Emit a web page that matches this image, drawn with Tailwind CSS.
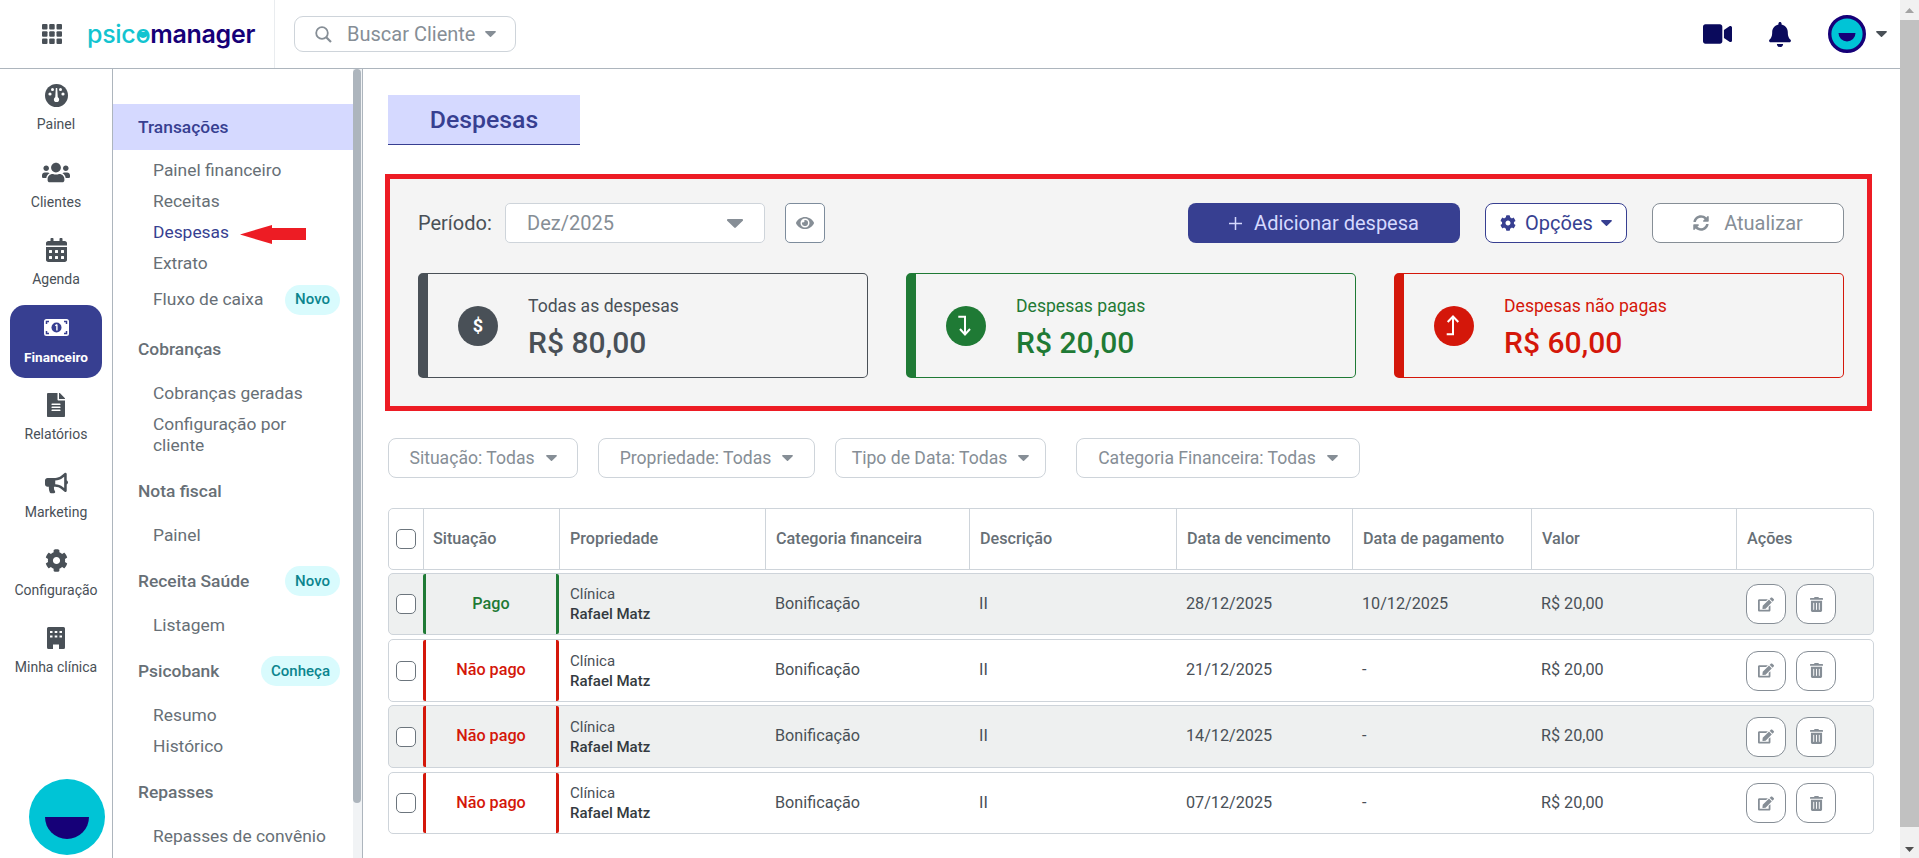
<!DOCTYPE html>
<html lang="pt-BR">
  <head>
    <meta charset="UTF-8" />
    <title>Despesas</title>
    <script src="https://cdn.jsdelivr.net/npm/@tailwindcss/browser@4"></script>
  </head>
  <body class="h-[858px] w-[1919px] overflow-hidden bg-white font-['Roboto',sans-serif] text-[#495057]">
    <svg class="hidden">
      <symbol id="caret" viewBox="0 0 16 9"><path d="M1 0h14c1 0 1.400 1 .8 1.700L8.800 8.600c-.4.500-1.200.500-1.600 0L.2 1.700C-.4 1 0 0 1 0z" fill="currentColor" /></symbol>
      <symbol id="edit" viewBox="0 0 576 512"><path fill="currentColor" d="M402.600 83.200l90.200 90.200c3.800 3.800 3.800 10 0 13.800L274.400 405.600l-92.800 10.300c-12.400 1.400-22.900-9.100-21.500-21.500l10.300-92.800L388.800 83.200c3.800-3.800 10-3.800 13.800 0zm162-22.900l-48.800-48.800c-15.200-15.200-39.900-15.200-55.200 0l-35.400 35.400c-3.800 3.800-3.800 10 0 13.800l90.200 90.200c3.800 3.800 10 3.800 13.800 0l35.400-35.400c15.200-15.300 15.200-40 0-55.200zM384 346.200V448H64V128h229.800c3.200 0 6.200-1.300 8.500-3.500l40-40c7.600-7.600 2.200-20.500-8.500-20.500H48C21.500 64 0 85.500 0 112v352c0 26.500 21.500 48 48 48h352c26.500 0 48-21.500 48-48V306.200c0-10.700-12.900-16-20.500-8.500l-40 40c-2.200 2.300-3.500 5.300-3.500 8.500z" /></symbol>
      <symbol id="trash" viewBox="0 0 448 512"><path fill="currentColor" d="M32 464a48 48 0 0 0 48 48h288a48 48 0 0 0 48-48V128H32zm272-256a16 16 0 0 1 32 0v224a16 16 0 0 1-32 0zm-96 0a16 16 0 0 1 32 0v224a16 16 0 0 1-32 0zm-96 0a16 16 0 0 1 32 0v224a16 16 0 0 1-32 0zM432 32H312l-9.400-18.700A24 24 0 0 0 281.100 0H166.800a23.720 23.720 0 0 0-21.400 13.300L136 32H16A16 16 0 0 0 0 48v32a16 16 0 0 0 16 16h416a16 16 0 0 0 16-16V48a16 16 0 0 0-16-16z" /></symbol>
      <symbol id="cog" viewBox="0 0 512 512"><path fill="currentColor" d="M487.400 315.700l-42.600-24.600c4.300-23.200 4.300-47 0-70.200l42.600-24.600c4.900-2.800 7.100-8.600 5.500-14-11.100-35.600-30-67.800-54.700-94.600-3.800-4.100-10-5.100-14.800-2.300L380.800 110c-17.900-15.400-38.500-27.300-60.800-35.100V25.800c0-5.600-3.900-10.500-9.400-11.700-36.700-8.200-74.300-7.800-109.200 0-5.500 1.200-9.400 6.100-9.400 11.700V75c-22.200 7.900-42.800 19.800-60.800 35.100L88.700 85.500c-4.900-2.800-11-1.900-14.800 2.300-24.700 26.700-43.600 58.900-54.700 94.600-1.700 5.400.6 11.200 5.500 14L67.300 221c-4.300 23.200-4.300 47 0 70.200l-42.600 24.600c-4.900 2.800-7.100 8.600-5.500 14 11.100 35.600 30 67.800 54.700 94.600 3.800 4.100 10 5.100 14.800 2.300l42.600-24.600c17.900 15.400 38.500 27.300 60.800 35.100v49.200c0 5.600 3.900 10.500 9.400 11.700 36.700 8.200 74.300 7.800 109.200 0 5.500-1.200 9.400-6.100 9.400-11.700v-49.200c22.200-7.900 42.800-19.800 60.800-35.100l42.600 24.600c4.900 2.800 11 1.900 14.800-2.300 24.700-26.700 43.600-58.900 54.700-94.600 1.500-5.500-.7-11.300-5.600-14.100zM256 336c-44.100 0-80-35.900-80-80s35.900-80 80-80 80 35.900 80 80-35.900 80-80 80z" /></symbol>
    </svg>

    <div class="flex h-full">
      <div class="flex h-full w-[1900px] flex-col">
        <!-- Top bar -->
        <header class="flex h-[69px] shrink-0 items-center border-b border-[#adb5bd]">
          <div class="flex h-full w-[275px] shrink-0 items-center border-r border-[#e9ecef]">
            <svg class="ml-[42px] h-5 w-5 text-[#495057]" viewBox="0 0 20 20" fill="currentColor">
              <rect x="0" y="0" width="5.500" height="5.500" rx="1" /><rect x="7.200" y="0" width="5.500" height="5.500" rx="1" /><rect x="14.500" y="0" width="5.500" height="5.500" rx="1" />
              <rect x="0" y="7.200" width="5.500" height="5.500" rx="1" /><rect x="7.200" y="7.200" width="5.500" height="5.500" rx="1" /><rect x="14.500" y="7.200" width="5.500" height="5.500" rx="1" />
              <rect x="0" y="14.500" width="5.500" height="5.500" rx="1" /><rect x="7.200" y="14.500" width="5.500" height="5.500" rx="1" /><rect x="14.500" y="14.500" width="5.500" height="5.500" rx="1" />
            </svg>
            <div class="ml-[25px] font-['Inter',sans-serif] text-[25px] leading-none tracking-[-0.3px]">
              <span class="font-medium text-[#13c4d0]">psic<span class="relative">o<span class="absolute left-[3px] top-[13px] h-[6px] w-[10px] rounded-b-full bg-[#13c4d0]"></span></span></span><span class="font-semibold text-[#160078]">manager</span>
            </div>
          </div>
          <button class="ml-[19px] flex h-[36px] w-[222px] items-center rounded-[9px] border border-[#ced4da] text-[#868e96]">
            <svg class="ml-[20px] h-[17px] w-[17px]" viewBox="0 0 17 17" fill="none" stroke="currentColor" stroke-width="1.800"><circle cx="7" cy="7" r="5.800" /><path d="M11.200 11.200L16 16" stroke-width="2.200" /></svg>
            <span class="ml-[15px] whitespace-nowrap text-[20px]">Buscar Cliente</span>
            <svg class="ml-[10px] h-[6px] w-[11px]"><use href="#caret" /></svg>
          </button>
          <div class="ml-auto flex items-center text-[#0a0a5c]">
            <svg class="h-[26px] w-[29px]" viewBox="0 0 576 512" fill="currentColor"><path d="M336.200 64H47.800C21.400 64 0 85.400 0 111.800v288.400C0 426.600 21.400 448 47.800 448h288.400c26.400 0 47.800-21.400 47.800-47.800V111.800c0-26.400-21.400-47.800-47.800-47.800zm189.400 37.700L416 177.300v157.400l109.600 75.500c21.200 14.600 50.400-.3 50.400-25.800V127.500c0-25.400-29.100-40.400-50.400-25.800z" /></svg>
            <svg class="ml-[37px] h-[25px] w-[22px]" viewBox="0 0 448 512" fill="currentColor"><path d="M224 512c35.320 0 63.970-28.650 63.970-64H160.030c0 35.350 28.650 64 63.970 64zm215.390-149.710c-19.320-20.760-55.470-51.990-55.470-154.290 0-77.700-54.480-139.900-127.940-155.160V32c0-17.670-14.320-32-31.980-32s-31.980 14.330-31.980 32v20.840C118.560 68.100 64.080 130.300 64.080 208c0 102.300-36.150 133.530-55.470 154.290-6 6.450-8.660 14.160-8.610 21.710.11 16.400 12.980 32 32.100 32h383.800c19.120 0 32-15.600 32.100-32 .05-7.550-2.610-15.270-8.610-21.710z" /></svg>
            <svg class="ml-[37px] h-[38px] w-[38px]" viewBox="0 0 38 38"><circle cx="19" cy="19" r="17.300" fill="#00c4d6" stroke="#160078" stroke-width="3.400" /><path d="M10.500 18h17a8.500 8.500 0 0 1-17 0z" fill="#160078" /></svg>
            <svg class="ml-[10px] mr-[13px] h-[6px] w-[11px] text-[#495057]"><use href="#caret" /></svg>
          </div>
        </header>

        <div class="flex min-h-0 flex-1">
          <!-- Icon rail -->
          <nav class="flex w-[113px] shrink-0 flex-col gap-[4.600px] border-r border-[#adb5bd] pt-[3px] text-[14px] leading-5">
            <a class="ml-[10px] flex h-[73px] w-[92px] flex-col items-center pt-[11px]">
              <span class="flex h-6 items-center"><svg class="h-[23px] w-[23px]" viewBox="0 0 23 23"><circle cx="11.500" cy="11.500" r="11.500" fill="#495057" /><g fill="#fff"><circle cx="5" cy="10" r="1.600" /><circle cx="18" cy="10" r="1.600" /><circle cx="7.500" cy="5.500" r="1.500" /><circle cx="15.500" cy="5.500" r="1.500" /><path d="M10.800 4h1.400l.6 10h-2.600z" /><circle cx="11.500" cy="15.500" r="2.600" /></g></svg></span>
              <span class="mt-[7px]">Painel</span>
            </a>
            <a class="ml-[10px] flex h-[73px] w-[92px] flex-col items-center pt-[11px]">
              <span class="flex h-6 items-center"><svg class="h-[23px] w-[28px]" viewBox="0 0 640 512" fill="currentColor"><path d="M96 224c35.300 0 64-28.700 64-64s-28.700-64-64-64-64 28.700-64 64 28.700 64 64 64zm448 0c35.300 0 64-28.700 64-64s-28.700-64-64-64-64 28.700-64 64 28.700 64 64 64zm32 32h-64c-17.600 0-33.500 7.100-45.100 18.600 40.300 22.100 68.900 62 75.100 109.400h66c17.700 0 32-14.300 32-32v-32c0-35.300-28.700-64-64-64zm-256 0c61.900 0 112-50.100 112-112S381.900 32 320 32 208 82.100 208 144s50.100 112 112 112zm76.800 32h-8.300c-20.800 10-43.900 16-68.500 16s-47.600-6-68.500-16h-8.300C179.600 288 128 339.600 128 403.200V432c0 26.500 21.500 48 48 48h288c26.500 0 48-21.500 48-48v-28.800c0-63.600-51.600-115.200-115.200-115.200zm-223.700-13.400C161.500 263.100 145.600 256 128 256H64c-35.300 0-64 28.700-64 64v32c0 17.700 14.300 32 32 32h65.900c6.300-47.400 34.900-87.300 75.200-109.400z" /></svg></span>
              <span class="mt-[7px]">Clientes</span>
            </a>
            <a class="ml-[10px] flex h-[73px] w-[92px] flex-col items-center pt-[11px]">
              <span class="flex h-6 items-center"><svg class="h-[24px] w-[21px]" viewBox="0 0 448 512" fill="currentColor"><path d="M0 464c0 26.500 21.500 48 48 48h352c26.500 0 48-21.500 48-48V192H0v272zm320-196c0-6.600 5.400-12 12-12h40c6.600 0 12 5.400 12 12v40c0 6.600-5.400 12-12 12h-40c-6.600 0-12-5.400-12-12v-40zm0 128c0-6.600 5.400-12 12-12h40c6.600 0 12 5.400 12 12v40c0 6.600-5.400 12-12 12h-40c-6.600 0-12-5.400-12-12v-40zM192 268c0-6.600 5.400-12 12-12h40c6.600 0 12 5.400 12 12v40c0 6.600-5.400 12-12 12h-40c-6.600 0-12-5.400-12-12v-40zm0 128c0-6.600 5.400-12 12-12h40c6.600 0 12 5.400 12 12v40c0 6.600-5.400 12-12 12h-40c-6.600 0-12-5.400-12-12v-40zM64 268c0-6.600 5.400-12 12-12h40c6.600 0 12 5.400 12 12v40c0 6.600-5.400 12-12 12H76c-6.600 0-12-5.400-12-12v-40zm0 128c0-6.600 5.400-12 12-12h40c6.600 0 12 5.400 12 12v40c0 6.600-5.400 12-12 12H76c-6.600 0-12-5.400-12-12v-40zM400 64h-48V16c0-8.800-7.200-16-16-16h-32c-8.800 0-16 7.200-16 16v48H160V16c0-8.800-7.200-16-16-16h-32c-8.800 0-16 7.200-16 16v48H48C21.500 64 0 85.500 0 112v48h448v-48c0-26.500-21.500-48-48-48z" /></svg></span>
              <span class="mt-[7px]">Agenda</span>
            </a>
            <a class="ml-[10px] flex h-[73px] w-[92px] flex-col items-center rounded-[15px] bg-[#373f91] pt-[11px] text-[13.600px] font-bold text-white">
              <span class="flex h-6 items-center"><svg class="h-[17px] w-[25px]" viewBox="0 0 25 17"><rect width="25" height="17" rx="2.500" fill="#fff" /><circle cx="12.500" cy="8.500" r="5" fill="#373f91" /><path d="M12.900 5.500v6M11.300 6.800l1.600-1.300" stroke="#fff" stroke-width="1.400" fill="none" /><path d="M2.500 5V2.500H5M20 2.500h2.500V5M2.500 12v2.500H5M20 14.500h2.500V12" stroke="#373f91" stroke-width="1.500" fill="none" /></svg></span>
              <span class="mt-[7px]">Financeiro</span>
            </a>
            <a class="ml-[10px] flex h-[73px] w-[92px] flex-col items-center pt-[11px]">
              <span class="flex h-6 items-center"><svg class="h-[24px] w-[18px]" viewBox="0 0 384 512" fill="currentColor"><path d="M224 136V0H24C10.700 0 0 10.700 0 24v464c0 13.300 10.700 24 24 24h336c13.300 0 24-10.700 24-24V160H248c-13.200 0-24-10.800-24-24zm64 236c0 6.600-5.400 12-12 12H108c-6.600 0-12-5.400-12-12v-8c0-6.600 5.400-12 12-12h168c6.600 0 12 5.400 12 12v8zm0-64c0 6.600-5.400 12-12 12H108c-6.600 0-12-5.400-12-12v-8c0-6.600 5.400-12 12-12h168c6.600 0 12 5.400 12 12v8zm0-72v8c0 6.600-5.400 12-12 12H108c-6.600 0-12-5.400-12-12v-8c0-6.600 5.400-12 12-12h168c6.600 0 12 5.400 12 12zm96-114.100v6.100H256V0h6.100c6.400 0 12.500 2.500 17 7l97.900 98c4.500 4.500 7 10.600 7 16.900z" /></svg></span>
              <span class="mt-[7px]">Relatórios</span>
            </a>
            <a class="ml-[10px] flex h-[73px] w-[92px] flex-col items-center pt-[11px]">
              <span class="flex h-6 items-center"><svg class="h-[22px] w-[23px]" viewBox="0 0 576 512" fill="currentColor"><path d="M576 240c0-23.630-12.950-44.040-32-55.120V32.010C544 23.260 537.020 0 512 0c-7.120 0-14.190 2.380-19.980 7.020l-85.030 68.030C364.280 109.190 310.660 128 256 128H64c-35.350 0-64 28.650-64 64v96c0 35.350 28.650 64 64 64h33.700c-1.390 10.480-2.180 21.140-2.180 32 0 39.770 9.260 77.350 25.560 110.940 5.190 10.690 16.520 17.060 28.400 17.060h74.280c26.050 0 41.690-29.840 25.900-50.560-16.400-21.520-26.150-48.360-26.150-77.440 0-11.110 1.620-21.790 4.410-32H256c54.660 0 108.280 18.810 150.980 52.950l85.030 68.030a32.023 32.023 0 0 0 19.980 7.020c24.920 0 32-22.780 32-32V295.130C563.050 284.040 576 263.630 576 240zm-96 141.420l-33.050-26.440C392.950 311.780 325.120 288 256 288v-96c69.120 0 136.950-23.780 190.950-66.980L480 98.580v282.840z" /></svg></span>
              <span class="mt-[7px]">Marketing</span>
            </a>
            <a class="ml-[10px] flex h-[73px] w-[92px] flex-col items-center pt-[11px]">
              <span class="flex h-6 items-center"><svg class="h-[23px] w-[23px]"><use href="#cog" /></svg></span>
              <span class="mt-[7px] whitespace-nowrap">Configuração</span>
            </a>
            <a class="ml-[10px] flex h-[73px] w-[92px] flex-col items-center pt-[11px]">
              <span class="flex h-6 items-center"><svg class="h-[22px] w-[18px]" viewBox="0 0 18 22" fill="currentColor"><path fill-rule="evenodd" d="M1.500 0h15A1.500 1.500 0 0 1 18 1.500V20.500a1.500 1.500 0 0 1-1.500 1.500H12V17.500H6V22H1.500A1.500 1.500 0 0 1 0 20.500V1.500A1.500 1.500 0 0 1 1.500 0zM3 4v2h2.500V4zm4.700 0v2h2.600V4zM12.500 4v2H15V4zM3 8.500v2h2.500v-2zm4.700 0v2h2.600v-2zm4.800 0v2H15v-2z" /></svg></span>
              <span class="mt-[7px] whitespace-nowrap">Minha clínica</span>
            </a>
            <svg class="ml-[29px] mt-auto mb-[3px] h-[76px] w-[76px] shrink-0" viewBox="0 0 76 76"><circle cx="38" cy="38" r="38" fill="#00c4d6" /><path d="M16 38h44a22 22 0 0 1-44 0z" fill="#160078" /></svg>
          </nav>

          <!-- Submenu -->
          <aside class="relative flex w-[250px] shrink-0 border-r border-[#adb5bd] text-[17.400px]">
            <div class="w-[240px] shrink-0 pt-[35px] leading-[21px]">
              <h3 class="flex h-[46px] items-center bg-[#d5d9ff] pl-[25px] font-medium text-[#373f91]">Transações</h3>
              <ul class="mt-[5px] pl-[40px] text-[#676f76]">
                <li class="flex h-[31px] items-center">Painel financeiro</li>
                <li class="flex h-[31px] items-center">Receitas</li>
                <li class="flex h-[31px] items-center text-[#373f91]">Despesas</li>
                <li class="flex h-[31px] items-center">Extrato</li>
                <li class="mt-[5px] flex h-[31px] items-center justify-between pr-[13px]">Fluxo de caixa<span class="flex h-[30px] items-center rounded-full bg-[#d9fbfd] px-[10px] text-[15px] font-medium text-[#0b858e]">Novo</span></li>
              </ul>
              <h3 class="mt-[11px] flex h-[46px] items-center pl-[25px] font-medium text-[#676f76]">Cobranças</h3>
              <ul class="mt-[6px] pl-[40px] text-[#676f76]">
                <li class="flex h-[31px] items-center">Cobranças geradas</li>
                <li class="w-[170px] py-[5px]">Configuração por cliente</li>
              </ul>
              <h3 class="mt-[7px] flex h-[46px] items-center pl-[25px] font-medium text-[#676f76]">Nota fiscal</h3>
              <ul class="mt-[6px] pl-[40px] text-[#676f76]">
                <li class="flex h-[31px] items-center">Painel</li>
              </ul>
              <h3 class="mt-[7px] flex h-[46px] items-center justify-between pl-[25px] pr-[13px] font-medium text-[#676f76]">Receita Saúde<span class="flex h-[30px] items-center rounded-full bg-[#d9fbfd] px-[10px] text-[15px] font-medium text-[#0b858e]">Novo</span></h3>
              <ul class="mt-[6px] pl-[40px] text-[#676f76]">
                <li class="flex h-[31px] items-center">Listagem</li>
              </ul>
              <h3 class="mt-[7px] flex h-[46px] items-center justify-between pl-[25px] pr-[13px] font-medium text-[#676f76]">Psicobank<span class="flex h-[30px] items-center rounded-full bg-[#d9fbfd] px-[10px] text-[15px] font-medium text-[#0b858e]">Conheça</span></h3>
              <ul class="mt-[6px] pl-[40px] text-[#676f76]">
                <li class="flex h-[31px] items-center">Resumo</li>
                <li class="flex h-[31px] items-center">Histórico</li>
              </ul>
              <h3 class="mt-[7px] flex h-[46px] items-center pl-[25px] font-medium text-[#676f76]">Repasses</h3>
              <ul class="mt-[6px] pl-[40px] text-[#676f76]">
                <li class="flex h-[31px] items-center">Repasses de convênio</li>
              </ul>
            </div>
            <div class="flex-1 bg-[#f1f3f5]">
              <div class="h-[734px] w-[8px] rounded-full bg-[#adb5bd]"></div>
            </div>
            <!-- hand-drawn arrow from the screenshot annotation -->
            <svg class="absolute left-[127px] top-[156px] h-[19px] w-[66px]" viewBox="0 0 66 19"><path d="M0 9.500L32 0v3h34v12H32v4z" fill="#ed1c24" /></svg>
          </aside>

          <!-- Content -->
          <main class="min-w-0 flex-1 pl-[25px] pr-[27px] pt-[26px]">
            <div class="flex h-[50px] w-[192px] items-center justify-center border-b border-[#373f91] bg-[#d5d9ff] text-[24.800px] font-medium text-[#373f91]">Despesas</div>

            <section class="-ml-[3px] mt-[29px] h-[237px] w-[1487px] border-[5px] border-[#ed1c24] bg-[#f4f4f4] pl-[28px] pr-[23px] pt-[24px]">
              <div class="flex h-10 items-center text-[20px]">
                <span class="w-[87px]">Período:</span>
                <div class="flex h-10 w-[260px] items-center justify-between rounded-[5px] border border-[#ced4da] bg-white pl-[21px] pr-[21px] text-[#868e96]">
                  Dez/2025
                  <svg class="h-[9px] w-[16px]"><use href="#caret" /></svg>
                </div>
                <button class="ml-[20px] flex h-10 w-10 items-center justify-center rounded-[5px] border border-[#7d8c9c] bg-white text-[#868e96]">
                  <svg class="h-[16px] w-[18px]" viewBox="0 0 576 512" fill="currentColor"><path d="M572.520 241.400C518.290 135.590 410.930 64 288 64S57.680 135.640 3.480 241.410a32.350 32.350 0 0 0 0 29.190C57.710 376.410 165.070 448 288 448s230.320-71.640 284.520-177.410a32.350 32.350 0 0 0 0-29.190zM288 400a144 144 0 1 1 144-144 143.930 143.930 0 0 1-144 144zm0-240a95.310 95.310 0 0 0-25.310 3.790 47.850 47.850 0 0 1-66.900 66.900A95.780 95.780 0 1 0 288 160z" /></svg>
                </button>
                <button class="ml-auto flex h-10 w-[272px] items-center justify-center rounded-[8px] bg-[#373f91] text-[#d5d9ff]">
                  <svg class="mr-[12px] h-[13px] w-[13px]" viewBox="0 0 13 13" stroke="currentColor" stroke-width="1.500"><path d="M6.500 0v13M0 6.500h13" /></svg>
                  Adicionar despesa
                </button>
                <button class="ml-[25px] flex h-10 w-[142px] items-center justify-center rounded-[8px] border border-[#373f91] bg-white text-[#373f91]">
                  <svg class="mr-[9px] h-[16px] w-[16px]"><use href="#cog" /></svg>
                  Opções
                  <svg class="ml-[8px] h-[6px] w-[11px]"><use href="#caret" /></svg>
                </button>
                <button class="ml-[25px] flex h-10 w-[192px] items-center justify-center rounded-[8px] border border-[#868e96] bg-white text-[#868e96]">
                  <svg class="mr-[15px] h-[16px] w-[16px]" viewBox="0 0 512 512" fill="currentColor"><path d="M370.720 133.280C339.458 104.008 298.888 87.962 255.848 88c-77.458.068-144.328 53.178-162.791 126.850-1.344 5.363-6.122 9.150-11.651 9.150H24.103c-7.498 0-13.194-6.807-11.807-14.176C33.933 94.924 134.813 8 256 8c66.448 0 126.791 26.136 171.315 68.685L463.030 40.970C478.149 25.851 504 36.559 504 57.941V192c0 13.255-10.745 24-24 24H345.941c-21.382 0-32.090-25.851-16.971-40.971l41.750-41.749zM32 296h134.059c21.382 0 32.090 25.851 16.971 40.971l-41.750 41.750c31.262 29.273 71.835 45.319 114.876 45.280 77.418-.07 144.315-53.144 162.787-126.849 1.344-5.363 6.122-9.150 11.651-9.150h57.304c7.498 0 13.194 6.807 11.807 14.176C478.067 417.076 377.187 504 256 504c-66.448 0-126.791-26.136-171.315-68.685L48.970 471.030C33.851 486.149 8 475.441 8 454.059V320c0-13.255 10.745-24 24-24z" /></svg>
                  Atualizar
                </button>
              </div>

              <div class="mt-[30px] flex gap-[38px]">
                <div class="flex h-[105px] w-[450px] items-center rounded-[5px] border border-[#495057] border-l-[10px] pl-[30px]">
                  <span class="flex h-10 w-10 items-center justify-center rounded-full bg-[#495057] text-[18px] font-bold text-white">$</span>
                  <div class="ml-[30px] pt-[6px]">
                    <p class="text-[17.600px] leading-5">Todas as despesas</p>
                    <p class="mt-[9px] text-[30px] font-medium leading-9">R$ 80,00</p>
                  </div>
                </div>
                <div class="flex h-[105px] w-[450px] items-center rounded-[5px] border border-[#1f7a35] border-l-[10px] pl-[30px] text-[#1f7a35]">
                  <svg class="h-10 w-10" viewBox="0 0 40 40"><circle cx="20" cy="20" r="20" fill="#1f7a35" /><path d="M12.300 10.700H19V28M14 23l5 5.500 5-5.500" fill="none" stroke="#fff" stroke-width="2" /></svg>
                  <div class="ml-[30px] pt-[6px]">
                    <p class="text-[17.600px] leading-5">Despesas pagas</p>
                    <p class="mt-[9px] text-[30px] font-medium leading-9">R$ 20,00</p>
                  </div>
                </div>
                <div class="flex h-[105px] w-[450px] items-center rounded-[5px] border border-[#d4170a] border-l-[10px] pl-[30px] text-[#d4170a]">
                  <svg class="h-10 w-10" viewBox="0 0 40 40"><circle cx="20" cy="20" r="20" fill="#d4170a" /><path d="M12.700 28.300H19V11M13.700 16l5.300-5.500 5.300 5.500" fill="none" stroke="#fff" stroke-width="2" /></svg>
                  <div class="ml-[30px] pt-[6px]">
                    <p class="text-[17.600px] leading-5">Despesas não pagas</p>
                    <p class="mt-[9px] text-[30px] font-medium leading-9">R$ 60,00</p>
                  </div>
                </div>
              </div>
            </section>

            <!-- Filters -->
            <div class="mt-[27px] flex gap-[20px] text-[17.600px] text-[#868e96]">
              <button class="flex h-10 w-[190px] items-center justify-center gap-[11px] rounded-[8px] border border-[#ced4da]">Situação: Todas<svg class="h-[6px] w-[11px]"><use href="#caret" /></svg></button>
              <button class="flex h-10 w-[217px] items-center justify-center gap-[11px] rounded-[8px] border border-[#ced4da]">Propriedade: Todas<svg class="h-[6px] w-[11px]"><use href="#caret" /></svg></button>
              <button class="flex h-10 w-[211px] items-center justify-center gap-[11px] rounded-[8px] border border-[#ced4da]">Tipo de Data: Todas<svg class="h-[6px] w-[11px]"><use href="#caret" /></svg></button>
              <button class="ml-[10px] flex h-10 w-[284px] items-center justify-center gap-[11px] rounded-[8px] border border-[#ced4da]">Categoria Financeira: Todas<svg class="h-[6px] w-[11px]"><use href="#caret" /></svg></button>
            </div>

            <!-- Table -->
            <div class="mt-[30px] flex w-[1486px] flex-col gap-[4px] text-[16.200px]">
              <div class="mb-[-1px] grid h-[62px] grid-cols-[34px_136px_206px_204px_207px_176px_179px_205px_1fr] items-stretch rounded-[5px] border border-[#ced4da] font-medium text-[#676f76]">
                <div class="flex items-center pl-[7px]"><span class="h-5 w-5 rounded-[5px] border border-[#6c757d] bg-white"></span></div>
                <div class="flex items-center border-l border-[#ced4da] pl-[9px]">Situação</div>
                <div class="flex items-center border-l border-[#ced4da] pl-[10px]">Propriedade</div>
                <div class="flex items-center border-l border-[#ced4da] pl-[10px]">Categoria financeira</div>
                <div class="flex items-center border-l border-[#ced4da] pl-[10px]">Descrição</div>
                <div class="flex items-center border-l border-[#ced4da] pl-[10px]">Data de vencimento</div>
                <div class="flex items-center border-l border-[#ced4da] pl-[10px]">Data de pagamento</div>
                <div class="flex items-center border-l border-[#ced4da] pl-[10px]">Valor</div>
                <div class="flex items-center border-l border-[#ced4da] pl-[10px]">Ações</div>
              </div>

              <div class="grid h-[62px] grid-cols-[34px_136px_206px_204px_207px_176px_179px_205px_1fr] items-stretch rounded-[5px] border border-[#ced4da] bg-[#eef0f0]">
                <div class="flex items-center pl-[7px]"><span class="h-5 w-5 rounded-[5px] border border-[#6c757d] bg-white"></span></div>
                <div class="flex items-center justify-center rounded-[2px] border-x-[3px] border-[#1f7a35] font-medium text-[#1f7a35]">Pago</div>
                <div class="flex flex-col justify-center pl-[11px] text-[15px] leading-5"><span>Clínica</span><span class="font-medium text-[#343a40]">Rafael Matz</span></div>
                <div class="flex items-center pl-[10px]">Bonificação</div>
                <div class="flex items-center pl-[10px]">II</div>
                <div class="flex items-center pl-[10px]">28/12/2025</div>
                <div class="flex items-center pl-[10px]">10/12/2025</div>
                <div class="flex items-center pl-[10px]">R$ 20,00</div>
                <div class="flex items-center gap-[10px] pl-[10px] text-[#868e96]">
                  <button class="flex h-10 w-10 items-center justify-center rounded-[12px] border border-[#868e96] bg-white"><svg class="h-[15px] w-[16px]"><use href="#edit" /></svg></button>
                  <button class="flex h-10 w-10 items-center justify-center rounded-[12px] border border-[#868e96] bg-white"><svg class="h-[15px] w-[13px]"><use href="#trash" /></svg></button>
                </div>
              </div>

              <div class="grid h-[63px] grid-cols-[34px_136px_206px_204px_207px_176px_179px_205px_1fr] items-stretch rounded-[5px] border border-[#ced4da]">
                <div class="flex items-center pl-[7px]"><span class="h-5 w-5 rounded-[5px] border border-[#6c757d] bg-white"></span></div>
                <div class="flex items-center justify-center rounded-[2px] border-x-[3px] border-[#d4170a] font-medium text-[#d4170a]">Não pago</div>
                <div class="flex flex-col justify-center pl-[11px] text-[15px] leading-5"><span>Clínica</span><span class="font-medium text-[#343a40]">Rafael Matz</span></div>
                <div class="flex items-center pl-[10px]">Bonificação</div>
                <div class="flex items-center pl-[10px]">II</div>
                <div class="flex items-center pl-[10px]">21/12/2025</div>
                <div class="flex items-center pl-[10px]">-</div>
                <div class="flex items-center pl-[10px]">R$ 20,00</div>
                <div class="flex items-center gap-[10px] pl-[10px] text-[#868e96]">
                  <button class="flex h-10 w-10 items-center justify-center rounded-[12px] border border-[#868e96] bg-white"><svg class="h-[15px] w-[16px]"><use href="#edit" /></svg></button>
                  <button class="flex h-10 w-10 items-center justify-center rounded-[12px] border border-[#868e96] bg-white"><svg class="h-[15px] w-[13px]"><use href="#trash" /></svg></button>
                </div>
              </div>

              <div class="-mt-[1px] grid h-[63px] grid-cols-[34px_136px_206px_204px_207px_176px_179px_205px_1fr] items-stretch rounded-[5px] border border-[#ced4da] bg-[#eef0f0]">
                <div class="flex items-center pl-[7px]"><span class="h-5 w-5 rounded-[5px] border border-[#6c757d] bg-white"></span></div>
                <div class="flex items-center justify-center rounded-[2px] border-x-[3px] border-[#d4170a] font-medium text-[#d4170a]">Não pago</div>
                <div class="flex flex-col justify-center pl-[11px] text-[15px] leading-5"><span>Clínica</span><span class="font-medium text-[#343a40]">Rafael Matz</span></div>
                <div class="flex items-center pl-[10px]">Bonificação</div>
                <div class="flex items-center pl-[10px]">II</div>
                <div class="flex items-center pl-[10px]">14/12/2025</div>
                <div class="flex items-center pl-[10px]">-</div>
                <div class="flex items-center pl-[10px]">R$ 20,00</div>
                <div class="flex items-center gap-[10px] pl-[10px] text-[#868e96]">
                  <button class="flex h-10 w-10 items-center justify-center rounded-[12px] border border-[#868e96] bg-white"><svg class="h-[15px] w-[16px]"><use href="#edit" /></svg></button>
                  <button class="flex h-10 w-10 items-center justify-center rounded-[12px] border border-[#868e96] bg-white"><svg class="h-[15px] w-[13px]"><use href="#trash" /></svg></button>
                </div>
              </div>

              <div class="grid h-[62px] grid-cols-[34px_136px_206px_204px_207px_176px_179px_205px_1fr] items-stretch rounded-[5px] border border-[#ced4da]">
                <div class="flex items-center pl-[7px]"><span class="h-5 w-5 rounded-[5px] border border-[#6c757d] bg-white"></span></div>
                <div class="flex items-center justify-center rounded-[2px] border-x-[3px] border-[#d4170a] font-medium text-[#d4170a]">Não pago</div>
                <div class="flex flex-col justify-center pl-[11px] text-[15px] leading-5"><span>Clínica</span><span class="font-medium text-[#343a40]">Rafael Matz</span></div>
                <div class="flex items-center pl-[10px]">Bonificação</div>
                <div class="flex items-center pl-[10px]">II</div>
                <div class="flex items-center pl-[10px]">07/12/2025</div>
                <div class="flex items-center pl-[10px]">-</div>
                <div class="flex items-center pl-[10px]">R$ 20,00</div>
                <div class="flex items-center gap-[10px] pl-[10px] text-[#868e96]">
                  <button class="flex h-10 w-10 items-center justify-center rounded-[12px] border border-[#868e96] bg-white"><svg class="h-[15px] w-[16px]"><use href="#edit" /></svg></button>
                  <button class="flex h-10 w-10 items-center justify-center rounded-[12px] border border-[#868e96] bg-white"><svg class="h-[15px] w-[13px]"><use href="#trash" /></svg></button>
                </div>
              </div>
            </div>
          </main>
        </div>
      </div>

      <!-- Page scrollbar -->
      <div class="flex h-full w-[19px] shrink-0 flex-col bg-[#f1f1f1]">
        <div class="flex h-[20px] items-center justify-center"><svg class="h-[5px] w-[9px] text-[#a3a3a3]" viewBox="0 0 9 5" fill="currentColor"><path d="M4.500 0L9 5H0z" /></svg></div>
        <div class="h-[807px] bg-[#c1c1c1]"></div>
        <div class="flex flex-1 items-end justify-center pb-[6px]"><svg class="h-[5px] w-[9px] text-[#505050]" viewBox="0 0 9 5" fill="currentColor"><path d="M0 0h9L4.500 5z" /></svg></div>
      </div>
    </div>
  </body>
</html>
